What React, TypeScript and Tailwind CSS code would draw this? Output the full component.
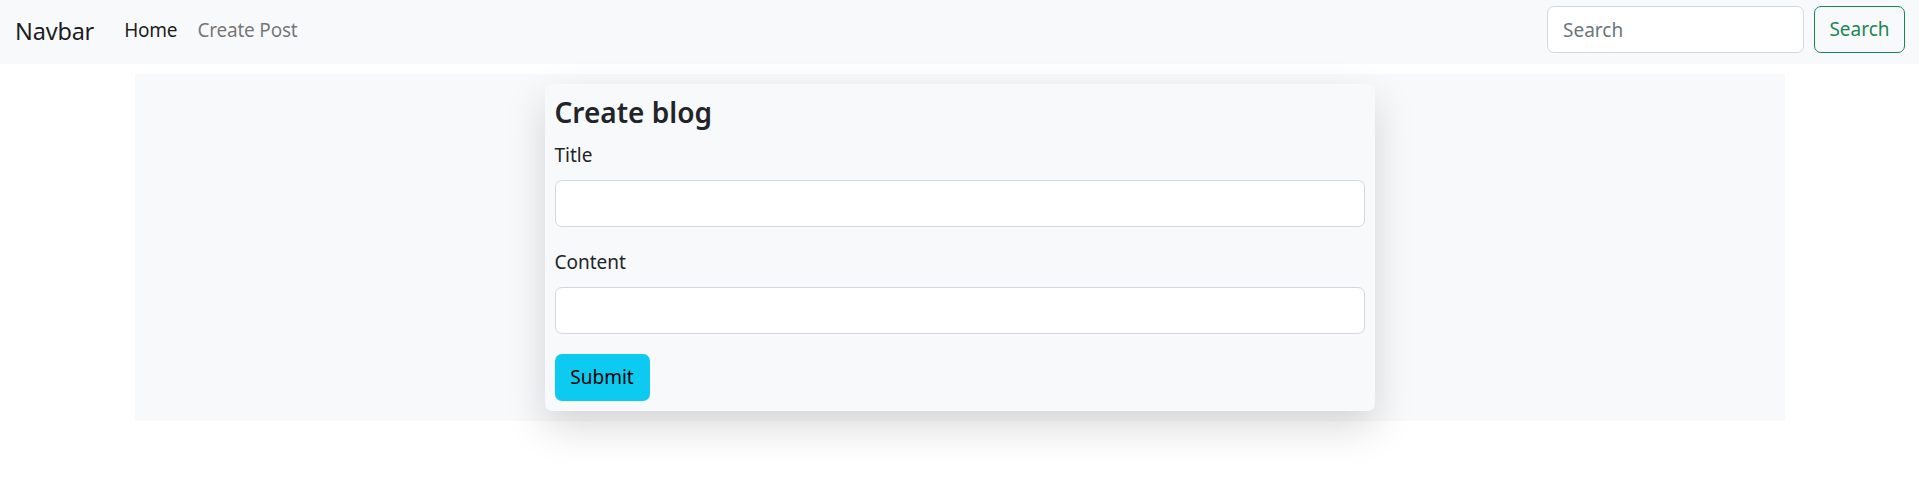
import React from "react";

export default function App() {
  const font = { fontFamily: '"Noto Sans", "Open Sans", sans-serif' };
  return (
    <div className="min-h-screen bg-white text-[#212529]" style={font}>
      <nav className="h-[64px] bg-[#f8f9fa] flex items-start justify-between pl-[15px] pr-[14px]">
        <div className="flex items-center h-[60px]">
          <span className="text-[23.5px] tracking-[-0.2px] text-black/90 mr-[20px] leading-none pt-[4px]">Navbar</span>
          <a className="px-[10px] text-[19px] tracking-[-0.2px] text-black/90 leading-none">Home</a>
          <a className="px-[10px] text-[19px] tracking-[-0.2px] text-black/55 leading-none">Create Post</a>
        </div>
        <form className="flex items-center gap-[10px] pt-[6px]" onSubmit={(e) => e.preventDefault()}>
          <input
            placeholder="Search"
            className="w-[257px] h-[47px] bg-white border border-[#d3d8de] rounded-[7px] px-[15px] text-[19px] placeholder:text-[#6c757d] outline-none"
          />
          <button className="w-[91px] h-[47px] border border-[#198754] text-[#198754] rounded-[7px] text-[19px]">
            Search
          </button>
        </form>
      </nav>
      <div className="mt-[10px] mx-auto w-[1650px] bg-[#f8f9fa] py-[10px]">
        <div className="mx-auto w-[830px] bg-[#f8f9fa] rounded-[7px] p-[10px] shadow-[0_16px_40px_rgba(0,0,0,0.15)]">
          <h4 className="text-[28px] font-semibold leading-[36px] mb-[10px]">Create blog</h4>
          <div className="mb-[20px]">
            <label className="block text-[19px] leading-[30px] mb-[10px]">Title</label>
            <input className="block w-full h-[47px] bg-white border border-[#d3d8de] rounded-[7px] px-[15px] text-[20px] outline-none" />
          </div>
          <div className="mb-[20px]">
            <label className="block text-[19px] leading-[30px] mb-[10px]">Content</label>
            <input className="block w-full h-[47px] bg-white border border-[#d3d8de] rounded-[7px] px-[15px] text-[20px] outline-none" />
          </div>
          <button className="h-[47px] w-[95px] bg-[#0dcaf0] text-black rounded-[7px] text-[19px]">Submit</button>
        </div>
      </div>
    </div>
  );
}
